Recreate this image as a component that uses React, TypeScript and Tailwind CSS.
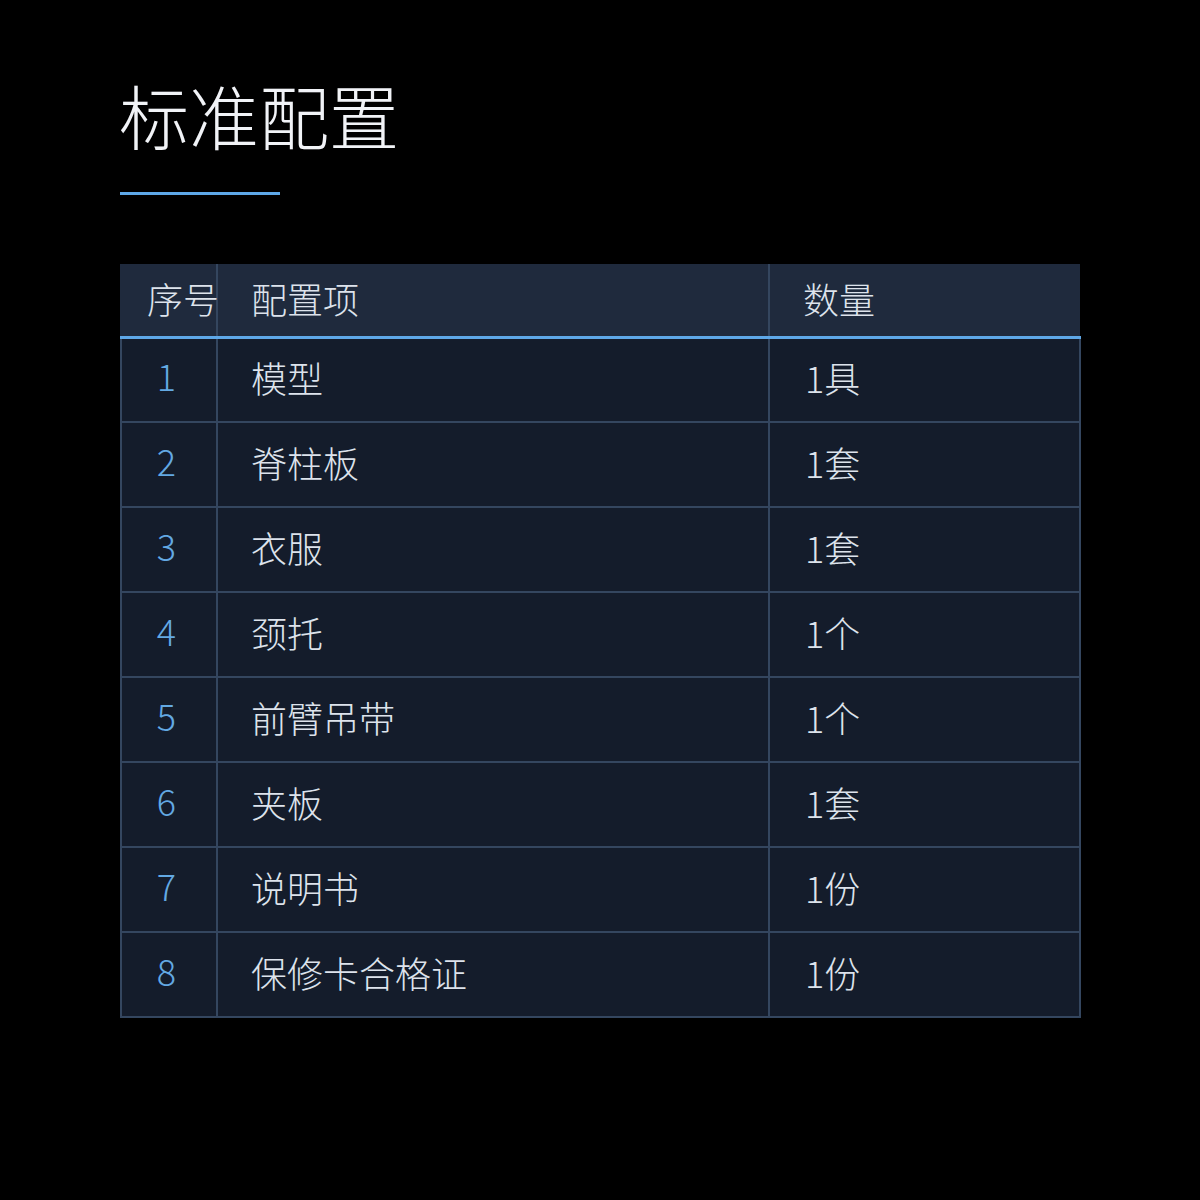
import React from 'react';

const ROWS = [
  ['1', '模型', '1具'],
  ['2', '脊柱板', '1套'],
  ['3', '衣服', '1套'],
  ['4', '颈托', '1个'],
  ['5', '前臂吊带', '1个'],
  ['6', '夹板', '1套'],
  ['7', '说明书', '1份'],
  ['8', '保修卡合格证', '1份'],
];

export default function App() {
  return (
    <div
      className="w-[1200px] h-[1200px] bg-black px-[120px] pt-[80px]"
      style={{ fontFamily: '"Noto Sans CJK SC", "Noto Sans", sans-serif' }}
    >
      {/* heading */}
      <h1 className="-ml-[1px] text-[70px] leading-none text-[#f1f3f7] font-light">标准配置</h1>
      <div className="mt-[42px] w-[160px] h-[3px] bg-[#5ea8e8]" />

      {/* table */}
      <table className="mt-[69px] w-[959px] border-collapse table-fixed text-[36px] text-[#dde3ec]">
        <colgroup>
          <col className="w-[96px]" />
          <col className="w-[552px]" />
          <col className="w-[311px]" />
        </colgroup>
        <thead>
          <tr className="h-[73px] bg-[#1f2a3d] border-b-[3px] border-b-[#5ea8e8]">
            <th className="font-light text-left pl-[25px] pb-[4px] whitespace-nowrap border-r-2 border-r-[#34465f] border-l-2 border-l-[#1f2a3d]">序号</th>
            <th className="font-light text-left pl-[33px] pb-[4px] border-r-2 border-r-[#34465f]">配置项</th>
            <th className="font-light text-left pl-[33px] pb-[4px]">数量</th>
          </tr>
        </thead>
        <tbody>
          {ROWS.map(([n, name, qty]) => (
            <tr key={n} className="h-[85px] bg-[#141c2b] font-light">
              <td className="text-center pr-[5px] pb-[10px] text-[#63a9e3] border-2 border-[#34465f] border-t-0">{n}</td>
              <td className="pl-[33px] pb-[6px] border-2 border-[#34465f] border-t-0">{name}</td>
              <td className="pl-[35px] pb-[6px] border-2 border-[#34465f] border-t-0">{qty}</td>
            </tr>
          ))}
        </tbody>
      </table>
    </div>
  );
}
